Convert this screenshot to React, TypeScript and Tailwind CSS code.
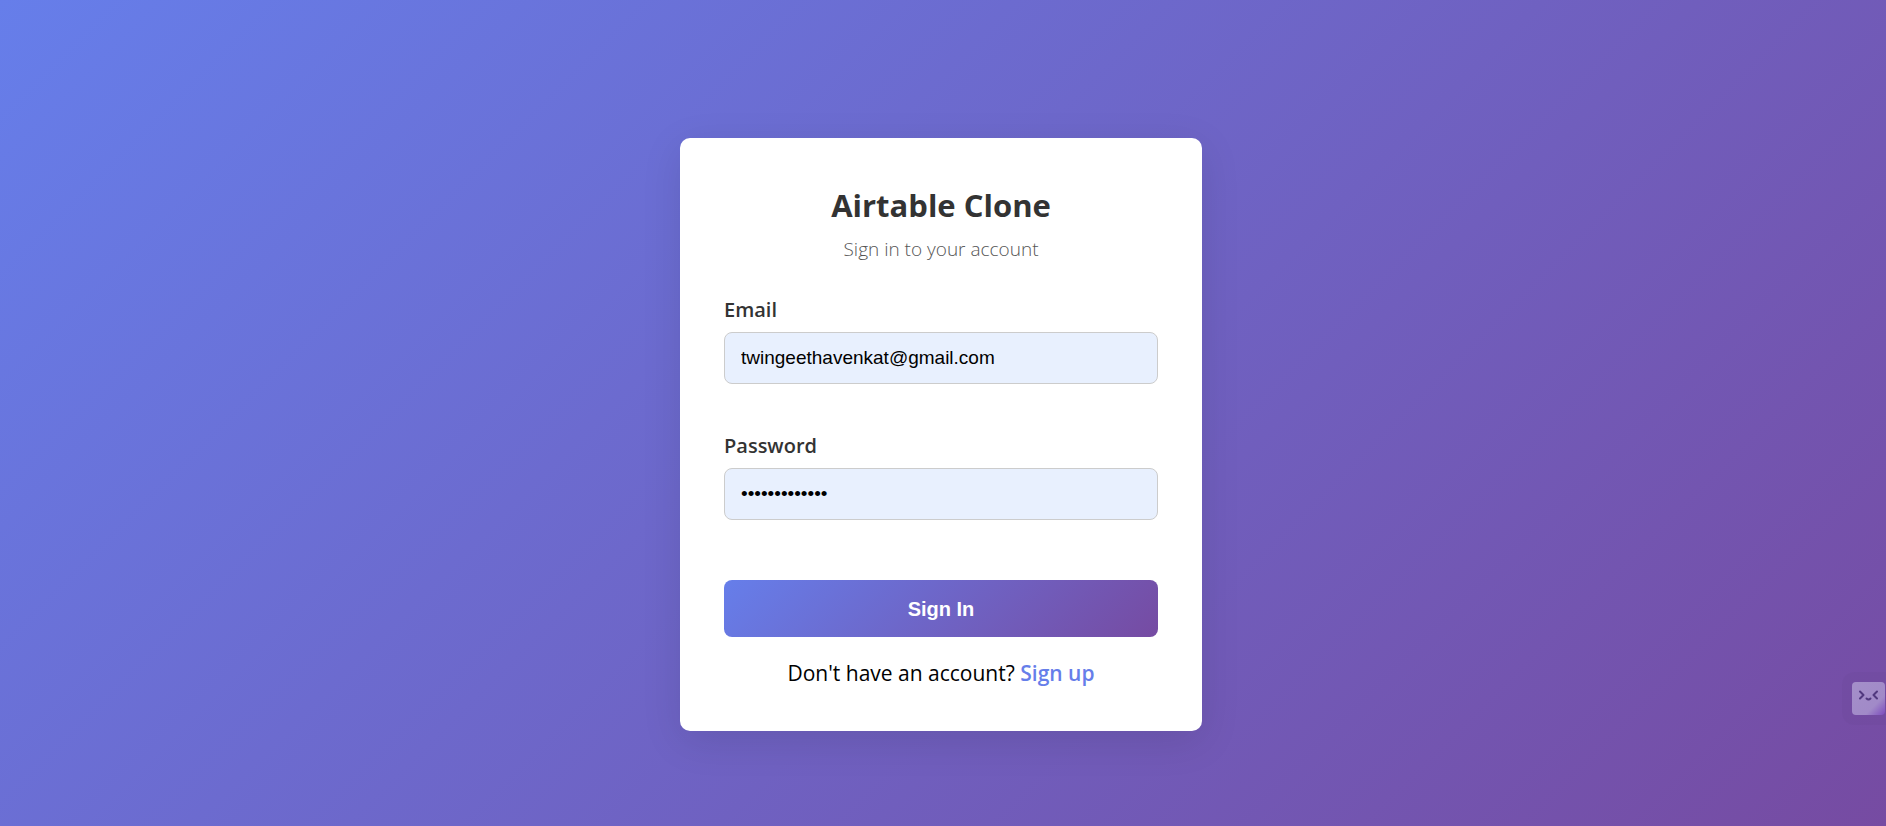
import { useState } from "react";

type FieldProps = {
  id: string;
  label: string;
  type: string;
  value: string;
  onChange: (value: string) => void;
};

function Field({ id, label, type, value, onChange }: FieldProps) {
  return (
    <div className="mb-12">
      <label htmlFor={id} className="mb-2 block text-[20px] leading-7 font-semibold text-[#333333]">
        {label}
      </label>
      <input
        id={id}
        type={type}
        value={value}
        onChange={(e) => onChange(e.target.value)}
        className="block h-13 w-full rounded-lg border border-[#cccccc] bg-[#e8f0fe] px-4 font-['Liberation_Sans',Arial,sans-serif] text-[19px] leading-6 text-black outline-none"
      />
    </div>
  );
}

function AssistantBadge() {
  return (
    <button
      type="button"
      aria-label="Open assistant"
      className="fixed top-[672px] right-0 rounded-l-xl bg-black/2 py-[10px] pr-px pl-[10px]"
    >
      <span className="block size-[33px] rounded bg-[linear-gradient(135deg,#a48fc9_0%,#a18ac8_70%,#7c4bbd_100%)]">
        <svg viewBox="0 0 33 33" className="size-[33px]" fill="none" stroke="#51397f" strokeWidth="2" strokeLinecap="round" strokeLinejoin="round">
          <path d="M8 9.5l3.5 3.5L8 16.5" />
          <path d="M25 9.5L21.500 13l3.500 3.500" />
          <path d="M14.500 16.500q2 2 4 0" />
        </svg>
      </span>
    </button>
  );
}

export default function App() {
  const [email, setEmail] = useState("twingeethavenkat@gmail.com");
  const [password, setPassword] = useState("abcdefghijklm");

  return (
    <main className="flex min-h-screen items-center justify-center bg-[linear-gradient(135deg,#667eea_0%,#764ba2_100%)] pt-[43px] pr-1 font-['Open_Sans','Noto_Sans',sans-serif]">
      <section className="w-full max-w-[522px] rounded-[10px] bg-white px-11 pt-[43px] pb-[42px] shadow-[0_10px_40px_rgba(0,0,0,0.1)]">
        <header className="mb-[31px] text-center">
          <h1 className="text-[31px] leading-12 font-bold text-[#333333]">Airtable Clone</h1>
          <p className="mt-1 text-[19px] leading-8 font-light text-[#555555]">Sign in to your account</p>
        </header>
        <form onSubmit={(e) => e.preventDefault()}>
          <Field id="email" label="Email" type="email" value={email} onChange={setEmail} />
          <Field id="password" label="Password" type="password" value={password} onChange={setPassword} />
          <button
            type="submit"
            className="mt-3 h-[57px] w-full rounded-lg bg-[linear-gradient(135deg,#667eea_0%,#764ba2_100%)] font-['Liberation_Sans',Arial,sans-serif] text-[20px] font-bold text-white"
          >
            Sign In
          </button>
        </form>
        <p className="mt-5 text-center text-[21px] leading-8 text-black">
          Don't have an account?{" "}
          <a href="#signup" className="font-semibold text-[#667eea]">
            Sign up
          </a>
        </p>
      </section>
      <AssistantBadge />
    </main>
  );
}
